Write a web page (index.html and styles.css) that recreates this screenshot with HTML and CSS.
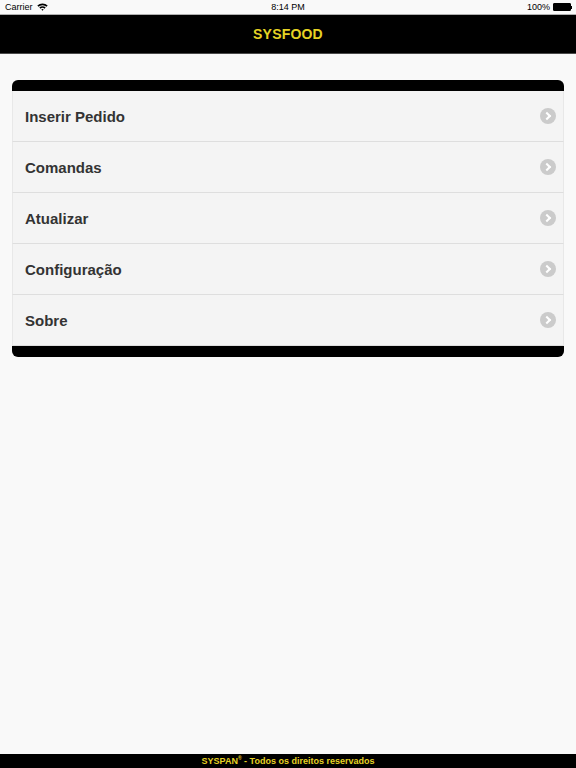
FILE: index.html
```html
<!DOCTYPE html>
<html>
<head>
<meta charset="utf-8">
<link rel="stylesheet" href="styles.css">
</head>
<body>
<div class="app">
  <div class="status">
    <div class="st-left">Carrier
      <svg class="wifi" width="11" height="8" viewBox="0 0 11 8"><path d="M0.3 2.6 A7.5 7.5 0 0 1 10.7 2.6 L9.5 3.8 A5.8 5.8 0 0 0 1.5 3.8 Z M2.3 4.6 A4.6 4.6 0 0 1 8.7 4.6 L7.5 5.8 A2.9 2.9 0 0 0 3.5 5.8 Z M4.3 6.6 A1.7 1.7 0 0 1 6.7 6.6 L5.5 7.8 Z" fill="#000"/></svg>
    </div>
    <div class="st-mid">8:14 PM</div>
    <div class="st-right">100%
      <span class="battery"></span><span class="bat-tip"></span>
    </div>
  </div>
  <div class="navbar"><span class="title">SYSFOOD</span></div>
  <main class="content">
    <div class="menu">
      <div class="cap cap-top"></div>
      <div class="row"><span class="label">Inserir Pedido</span><span class="chev"></span></div>
      <div class="row"><span class="label">Comandas</span><span class="chev"></span></div>
      <div class="row"><span class="label">Atualizar</span><span class="chev"></span></div>
      <div class="row"><span class="label">Configuração</span><span class="chev"></span></div>
      <div class="row"><span class="label">Sobre</span><span class="chev"></span></div>
      <div class="cap cap-bottom"></div>
    </div>
  </main>
  <footer class="footer">SYSPAN<sup>®</sup> - Todos os direitos reservados</footer>
</div>
</body>
</html>
```
FILE: styles.css
```css
html, body { margin: 0; padding: 0; }
body {
  background: #f9f9f9;
  font-family: "Liberation Sans", Arial, sans-serif;
}
.app {
  width: 576px;
  height: 768px;
  display: flex;
  flex-direction: column;
}
.status {
  height: 14px;
  display: flex;
  align-items: center;
  justify-content: space-between;
  padding: 0 4px 0 5px;
  font-size: 9px;
  color: #000;
  background: #f9f9f9;
  border-bottom: 1px solid #b0b0b0;
  position: relative;
}
.st-left { display: flex; align-items: center; gap: 4px; }
.st-mid { position: absolute; left: 0; right: 0; text-align: center; top: 2px; }
.st-right { display: flex; align-items: center; }
.battery {
  display: inline-block;
  width: 16px; height: 6px;
  border: 1px solid #000;
  border-radius: 1px;
  margin-left: 3px;
  background: #000;
}
.bat-tip { display: inline-block; width: 1px; height: 3px; background: #000; }
.navbar {
  height: 38px;
  background: #000;
  border-bottom: 1px solid #4a4a4a;
  display: flex;
  align-items: center;
  justify-content: center;
}
.title {
  color: #e6d224;
  font-weight: bold;
  font-size: 14px;
  letter-spacing: 0.2px;
}
.content {
  flex: 1;
  padding: 26px 12px 0 12px;
}
.menu {
  width: 552px;
}
.cap { height: 11px; background: #000; }
.cap-top { border-radius: 6px 6px 0 0; }
.cap-bottom { border-radius: 0 0 6px 6px; }
.row {
  height: 50px;
  background: #f4f4f4;
  border-left: 1px solid #e8e8e8;
  border-right: 1px solid #e8e8e8;
  border-bottom: 1px solid #dedede;
  display: flex;
  align-items: center;
  justify-content: space-between;
  padding: 0 7px 0 12px;
}
.row:last-of-type { border-bottom: none; height: 51px; }
.label {
  font-size: 15px;
  font-weight: bold;
  color: #333;
}
.chev {
  width: 16px; height: 16px;
  border-radius: 50%;
  background: #cbcbcb;
  position: relative;
}
.chev::after {
  content: "";
  position: absolute;
  left: 4px; top: 5px;
  width: 4px; height: 4px;
  border-top: 2px solid #fff;
  border-right: 2px solid #fff;
  transform: rotate(45deg);
}
.footer {
  height: 14px;
  background: #000;
  color: #e6d224;
  font-size: 9px;
  font-weight: bold;
  text-align: center;
  line-height: 15px;
}
.footer sup { font-size: 5px; vertical-align: 4px; line-height: 0; }
```
